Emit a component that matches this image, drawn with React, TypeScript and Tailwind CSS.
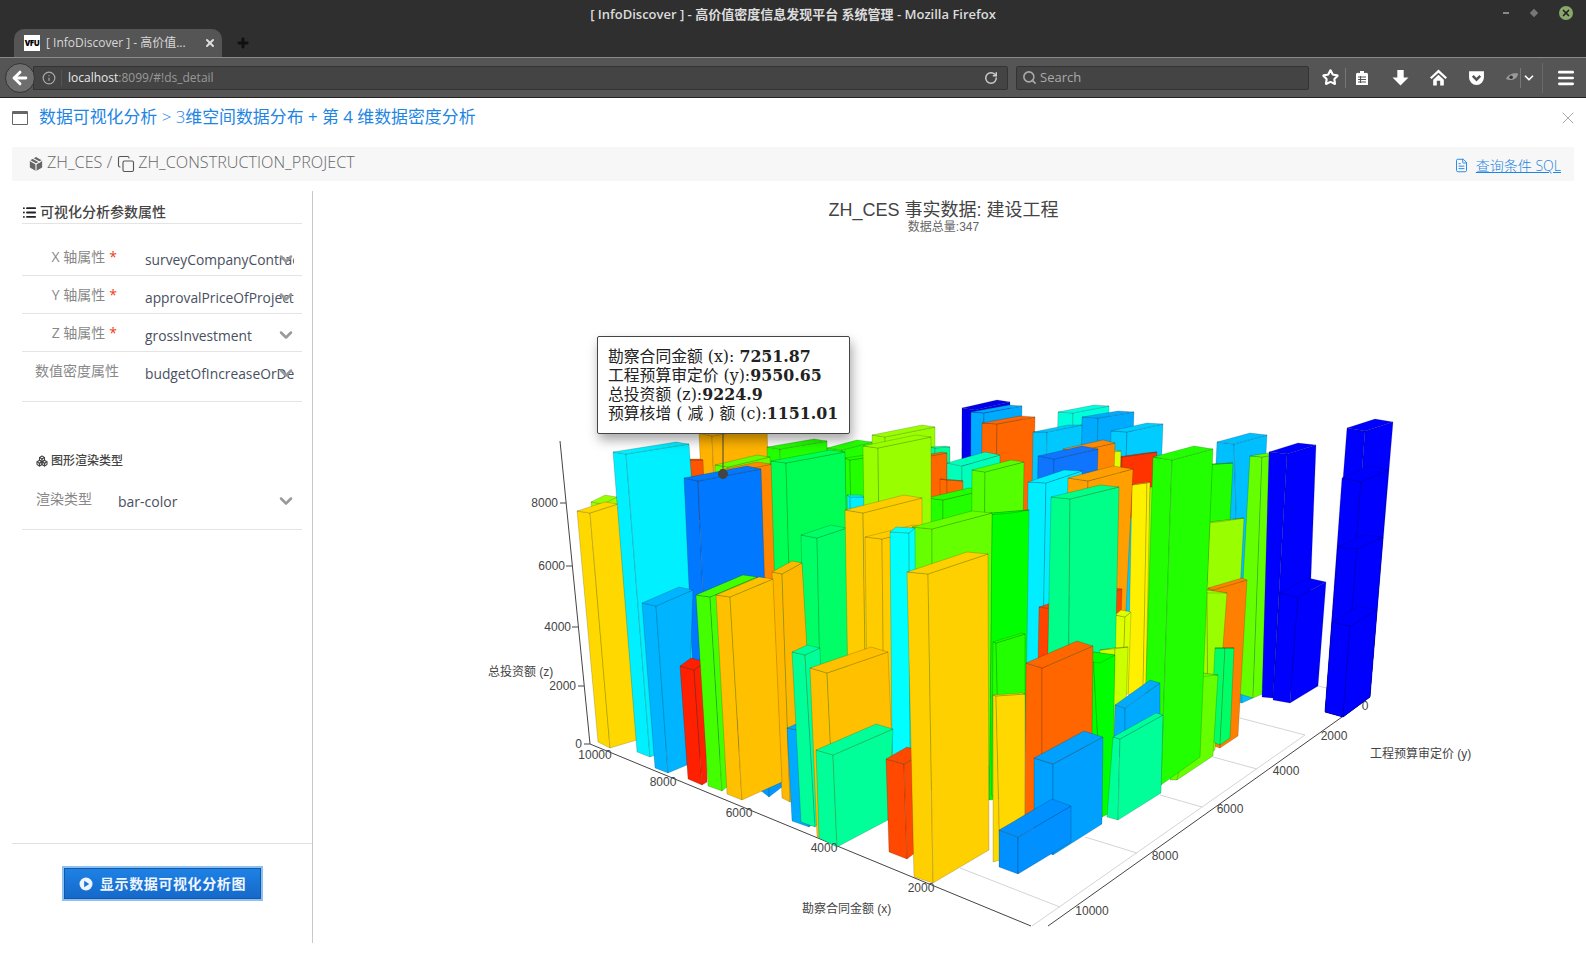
import { ArrowLeft, ChevronDown, Copy, FileText, Info, List, Menu, Package, Plus, RotateCw, Search, Star, X, Boxes } from 'lucide-react';

const sans = 'font-["Open_Sans","Noto_Sans_CJK_SC",sans-serif]';

type P = [number, number];
interface Bar {
  c: string;
  l: P; // left corner of the top face
  f: P; // front corner of the top face
  r: P; // right corner of the top face
  b: P; // front corner at the floor
  bl?: P; // left corner at the floor
  br?: P; // right corner at the floor
}

// back to front, page coordinates read off the plot
const bars: Bar[] = [
  { c: '#0000ee', l: [962, 408], f: [975, 410], r: [1010, 402], b: [985, 640] },
  { c: '#00aaff', l: [971, 412], f: [984, 413], r: [1022, 406], b: [990, 640] },
  { c: '#ff6600', l: [982, 423], f: [997, 424], r: [1035, 417], b: [1005, 700] },
  { c: '#00ffdd', l: [1058, 412], f: [1073, 413], r: [1109, 406], b: [1080, 640] },
  { c: '#00aaff', l: [1082, 417], f: [1098, 418], r: [1134, 412], b: [1110, 650] },
  { c: '#00ccff', l: [1111, 431], f: [1127, 432], r: [1163, 424], b: [1135, 650] },
  { c: '#00c8ff', l: [1033, 432], f: [1047, 432], r: [1082, 425], b: [1055, 650] },
  { c: '#ffb300', l: [699, 433], f: [712, 436], r: [767, 427], b: [730, 700] },
  { c: '#99ff00', l: [591, 502], f: [603, 504], r: [617, 497], b: [620, 742] },
  { c: '#22ff00', l: [767, 447], f: [780, 449], r: [827, 441], b: [800, 700] },
  { c: '#99ff00', l: [872, 435], f: [885, 437], r: [935, 427], b: [900, 600] },
  { c: '#22ff00', l: [827, 448], f: [842, 450], r: [872, 442], b: [860, 700] },
  { c: '#00ff99', l: [930, 447], f: [935, 448], r: [950, 447], b: [950, 560] },
  { c: '#ff6600', l: [925, 455], f: [930, 456], r: [947, 453], b: [950, 560] },
  { c: '#00ffbb', l: [947, 463], f: [962, 466], r: [1000, 455], b: [975, 560] },
  { c: '#ff6a00', l: [940, 479], f: [947, 480], r: [963, 481], b: [965, 560] },
  { c: '#ff5500', l: [687, 459], f: [690, 460], r: [703, 460], b: [705, 520] },
  { c: '#66ff00', l: [715, 465], f: [728, 467], r: [770, 457], b: [745, 620] },
  { c: '#ff8800', l: [720, 470], f: [735, 472], r: [772, 464], b: [755, 720] },
  { c: '#22ff00', l: [845, 458], f: [850, 460], r: [885, 455], b: [870, 650] },
  { c: '#00eeff', l: [847, 495], f: [850, 497], r: [864, 497], b: [870, 620] },
  { c: '#22ff00', l: [927, 498], f: [943, 500], r: [985, 490], b: [955, 700] },
  { c: '#55ff00', l: [972, 470], f: [985, 472], r: [1024, 462], b: [1000, 640] },

  // right side
  { c: '#00bfff', l: [1217, 442], f: [1234, 444], r: [1267, 435], b: [1242, 703], br: [1253, 698] },
  { c: '#66ff00', l: [1250, 456], f: [1262, 457], r: [1280, 454], b: [1253, 698], br: [1265, 693] },
  { c: '#0000ff', l: [1269, 452], f: [1287, 454], r: [1316, 445], b: [1273, 698], bl: [1262, 697], br: [1307, 680] },
  { c: '#0000ff', l: [1280, 593], f: [1298, 597], r: [1326, 582], b: [1290, 703], bl: [1273, 700], br: [1318, 686] },
  { c: '#0000ff', l: [1347, 428], f: [1365, 431], r: [1393, 422], b: [1343, 717], bl: [1325, 712], br: [1370, 697] },
  { c: '#0000ff', l: [1342, 478], f: [1361, 482], r: [1388, 470], b: [1343, 717], bl: [1325, 712], br: [1370, 697] },
  { c: '#0000ff', l: [1338, 547], f: [1357, 549], r: [1383, 537], b: [1343, 717], bl: [1325, 712], br: [1370, 697] },
  { c: '#0000ff', l: [1332, 622], f: [1350, 626], r: [1377, 610], b: [1343, 717], bl: [1325, 712], br: [1370, 697] },
  { c: '#22ff00', l: [1200, 465], f: [1212, 464], r: [1233, 463], b: [1225, 740] },
  { c: '#ff3300', l: [1195, 570], f: [1208, 569], r: [1221, 568], b: [1215, 700] },
  { c: '#99ff00', l: [1192, 525], f: [1210, 522], r: [1244, 518], b: [1218, 720] },
  { c: '#ff8000', l: [1208, 588], f: [1213, 590], r: [1247, 580], b: [1220, 748], br: [1238, 736] },
  { c: '#99ff00', l: [1190, 590], f: [1207, 590], r: [1227, 593], b: [1208, 755], br: [1215, 750] },
  { c: '#00ff66', l: [1215, 648], f: [1225, 648], r: [1234, 648], b: [1220, 745], br: [1230, 738] },

  // middle right
  { c: '#ff3300', l: [1110, 458], f: [1122, 457], r: [1157, 452], b: [1150, 520] },
  { c: '#ddff00', l: [1095, 452], f: [1105, 453], r: [1121, 451], b: [1120, 560] },
  { c: '#ff8800', l: [1063, 449], f: [1075, 452], r: [1115, 443], b: [1090, 500] },
  { c: '#0f75ff', l: [1038, 456], f: [1054, 459], r: [1098, 449], b: [1070, 520] },
  { c: '#99ff00', l: [1135, 490], f: [1150, 487], r: [1160, 486], b: [1160, 680] },
  { c: '#fff000', l: [1132, 485], f: [1147, 483], r: [1150, 482], b: [1143, 690], bl: [1128, 695], br: [1146, 688] },
  { c: '#00eeff', l: [1028, 482], f: [1046, 483], r: [1082, 471], b: [1050, 700] },
  { c: '#ffa000', l: [1068, 478], f: [1088, 481], r: [1133, 469], b: [1085, 700], br: [1122, 690] },
  { c: '#ff4400', l: [1039, 607], f: [1060, 610], r: [1122, 589], b: [1080, 760] },
  { c: '#ddff00', l: [1115, 615], f: [1125, 617], r: [1131, 612], b: [1135, 700] },
  { c: '#00ff88', l: [1051, 497], f: [1070, 499], r: [1119, 487], b: [1068, 745], br: [1114, 720] },
  { c: '#ccff00', l: [1100, 650], f: [1115, 648], r: [1128, 647], b: [1125, 740] },
  { c: '#66ff00', l: [1170, 676], f: [1202, 673], r: [1218, 675], b: [1177, 780], bl: [1170, 780], br: [1213, 756] },
  { c: '#22ff00', l: [1153, 457], f: [1172, 460], r: [1213, 449], b: [1161, 785], bl: [1143, 778], br: [1200, 757] },

  // left group
  { c: '#ffd800', l: [577, 511], f: [590, 513], r: [618, 504], b: [610, 748], bl: [598, 742], br: [637, 740] },
  { c: '#00f0ff', l: [613, 452], f: [626, 454], r: [689, 444], b: [650, 757], bl: [637, 752], br: [710, 735] },
  { c: '#0078ff', l: [684, 478], f: [698, 481], r: [761, 469], b: [720, 760] },
  { c: '#00b4ff', l: [642, 603], f: [656, 606], r: [693, 590], b: [668, 773], bl: [655, 768], br: [687, 765] },
  { c: '#ff2000', l: [680, 666], f: [694, 670], r: [705, 662], b: [702, 785], bl: [688, 779], br: [707, 782] },
  { c: '#44ff00', l: [696, 595], f: [710, 597], r: [757, 577], b: [722, 791], bl: [708, 786], br: [727, 787] },
  { c: '#00ff55', l: [771, 461], f: [786, 463], r: [845, 452], b: [805, 760] },
  { c: '#00ff66', l: [801, 535], f: [817, 538], r: [847, 528], b: [830, 760] },
  { c: '#0099ff', l: [755, 700], f: [768, 702], r: [785, 695], b: [769, 797], bl: [760, 790], br: [782, 787] },
  { c: '#ffb800', l: [772, 572], f: [782, 574], r: [802, 563], b: [790, 802], bl: [782, 798], br: [815, 790] },
  { c: '#ffc000', l: [716, 595], f: [730, 597], r: [773, 579], b: [742, 800], bl: [727, 794], br: [782, 782] },

  // center
  { c: '#99ff00', l: [863, 446], f: [878, 448], r: [931, 437], b: [900, 700] },
  { c: '#ffcc00', l: [845, 510], f: [863, 513], r: [922, 498], b: [880, 760] },
  { c: '#ffcc00', l: [865, 537], f: [882, 539], r: [930, 527], b: [895, 780] },
  { c: '#00ff00', l: [975, 516], f: [992, 513], r: [1029, 510], b: [1000, 800] },
  { c: '#66ff00', l: [912, 527], f: [932, 529], r: [992, 513], b: [960, 790] },
  { c: '#00ffff', l: [890, 532], f: [909, 533], r: [915, 528], b: [920, 770] },
  { c: '#00aaff', l: [787, 728], f: [797, 730], r: [815, 722], b: [809, 827], bl: [792, 821], br: [818, 820] },
  { c: '#00ff99', l: [792, 652], f: [805, 655], r: [820, 648], b: [815, 827], bl: [801, 822], br: [825, 820] },
  { c: '#ffc000', l: [810, 668], f: [827, 673], r: [888, 652], b: [835, 840], bl: [817, 837], br: [895, 815] },
  { c: '#00ff99', l: [816, 750], f: [833, 755], r: [893, 729], b: [837, 847], bl: [819, 838], br: [888, 820] },
  { c: '#22ff00', l: [993, 642], f: [996, 643], r: [1025, 634], b: [1000, 800], br: [1025, 790] },
  { c: '#ffd800', l: [993, 695], f: [996, 696], r: [1025, 694], b: [1000, 860], bl: [993, 862], br: [1025, 840] },
  { c: '#ff4800', l: [886, 759], f: [904, 764], r: [925, 752], b: [907, 859], bl: [889, 852], br: [925, 845] },
  { c: '#ffd000', l: [907, 572], f: [928, 574], r: [988, 554], b: [933, 883], bl: [914, 877], br: [989, 850] },

  // front right
  { c: '#00ff00', l: [1078, 660], f: [1093, 652], r: [1115, 655], b: [1102, 817], br: [1112, 812] },
  { c: '#ff6600', l: [1026, 663], f: [1042, 668], r: [1093, 646], b: [1042, 830], bl: [1025, 825], br: [1092, 737] },
  { c: '#00aaff', l: [1115, 705], f: [1125, 708], r: [1160, 683], b: [1125, 760], br: [1160, 760] },
  { c: '#00ff99', l: [1113, 737], f: [1120, 739], r: [1163, 715], b: [1118, 820], bl: [1107, 817], br: [1161, 793] },
  { c: '#00a0ff', l: [1034, 758], f: [1053, 764], r: [1103, 737], b: [1053, 855], bl: [1034, 845], br: [1102, 824] },
  { c: '#0090ff', l: [999, 830], f: [1018, 837], r: [1071, 806], b: [1018, 874], bl: [999, 867], br: [1071, 842] },
];

function pts(...p: P[]) {
  return p.map((a) => `${a[0]},${a[1]}`).join(' ');
}

// vertical edges lean toward the nadir of the camera, under the plot center
function lean(p: P, y: number): P {
  return [p[0] + (940 - p[0]) * (y - p[1]) * 0.00018, y];
}

function Bar3D({ bar }: { bar: Bar }) {
  const { c, l, f, r } = bar;
  const floor = bar.b[1];
  const b: P = bar.bl || bar.br ? bar.b : lean(f, floor);
  const bl: P = bar.bl || lean(l, floor + (l[1] - f[1]) - 4);
  const br: P = bar.br || lean(r, floor + (r[1] - f[1]) * 1.5);
  const back: P = [l[0] + r[0] - f[0], l[1] + r[1] - f[1]];
  return (
    <g fill={c} stroke="#000" strokeOpacity={0.22} strokeWidth={0.75} strokeLinejoin="round">
      <polygon points={pts(l, f, b, bl)} />
      <polygon points={pts(f, r, br, b)} />
      <polygon points={pts(l, back, r, f)} />
    </g>
  );
}

const zTicks: [string, number, number][] = [
  ['8000', 558, 503],
  ['6000', 565, 566],
  ['4000', 571, 627],
  ['2000', 576, 686],
  ['0', 582, 744],
];
const xTicks: [string, number, number][] = [
  ['10000', 595, 755],
  ['8000', 663, 782],
  ['6000', 739, 813],
  ['4000', 824, 848],
  ['2000', 921, 888],
];
const yTicks: [string, number, number][] = [
  ['0', 1365, 706],
  ['2000', 1334, 736],
  ['4000', 1286, 771],
  ['6000', 1230, 809],
  ['8000', 1165, 856],
  ['10000', 1092, 911],
];

function Chart() {
  const tick = { fontFamily: '"Liberation Sans", sans-serif', fontSize: 12, fill: '#444' };
  return (
    <svg viewBox="313 181 1273 762" className="absolute inset-0 h-full w-full">
      {/* floor grid */}
      <g stroke="#d4d4d4" strokeWidth={1} fill="none">
        <path d="M1060 907 L960 868" />
        <path d="M1137 853 L1085 837" />
        <path d="M1202 807 L1160 795" />
        <path d="M1257 769 L1213 757" />
        <path d="M1305 735 L1240 718" />
        <path d="M1032 926 L1305 735" />
        <path d="M741 795 L765 783" />
        <path d="M1318 686 L1345 692" />
      </g>
      {/* axes */}
      <g stroke="#444" strokeWidth={1} fill="none">
        <path d="M560 441 L590 744 L1031 926" />
        <path d="M1342 717 L1048 926" />
        <path d="M584 744 L590 744 M578 686 L584 686 M572 627 L578 627 M566 566 L572 566 M560 503 L566 503" />
      </g>
      {bars.map((b, i) => (
        <Bar3D key={i} bar={b} />
      ))}
      <g style={tick}>
        {zTicks.map(([t, x, y]) => (
          <text key={t} x={x} y={y + 4} textAnchor="end">
            {t}
          </text>
        ))}
        {xTicks.map(([t, x, y]) => (
          <text key={t} x={x} y={y + 4} textAnchor="middle">
            {t}
          </text>
        ))}
        {yTicks.map(([t, x, y]) => (
          <text key={t} x={x} y={y + 4} textAnchor="middle">
            {t}
          </text>
        ))}
      </g>
      <g style={{ fontFamily: '"Liberation Sans", "Noto Sans CJK SC", sans-serif', fontSize: 12, fill: '#444' }}>
        <text x={488} y={676}>总投资额 (z)</text>
        <text x={802} y={913}>勘察合同金额 (x)</text>
        <text x={1370} y={758}>工程预算审定价 (y)</text>
      </g>
      <g fill="#444" stroke="#444">
        <path d="M723 433 L723 474" fill="none" />
        <circle cx={723} cy={474} r={4.5} />
      </g>
    </svg>
  );
}

function Field({ label, value, required, line = true }: { label: string; value: string; required?: boolean; line?: boolean }) {
  return (
    <div className={line ? 'flex h-[38px] items-start border-b border-[#e4e4e4]' : 'flex h-[38px] items-start'}>
      <div className={required ? 'flex w-[123px] justify-end pr-[28px] pt-[9px] text-[14px] leading-[20px] text-[#888]' : 'flex w-[123px] justify-end pr-[26px] pt-[9px] text-[14px] leading-[20px] text-[#888]'}>
        {label}
        {required && <span className="ml-1 text-[#ed4014]">*</span>}
      </div>
      <div className="relative w-[149px] overflow-hidden pt-[12px] text-[13.8px] leading-[20px] whitespace-nowrap text-[#495060]">
        {value}
        <ChevronDown className="absolute right-[-2px] top-[11px] h-5 w-5 text-[#999]" strokeWidth={3} />
      </div>
    </div>
  );
}

export default function App() {
  return (
    <div className={`flex h-[960px] w-[1586px] flex-col overflow-hidden bg-white ${sans}`}>
      {/* window title + tab strip */}
      <div className="relative h-[57px] shrink-0 bg-[#2f2f2f]">
        <div className="flex h-[29px] items-center justify-center text-[13px] font-semibold text-[#dcdcdc]">
          [ InfoDiscover ] - 高价值密度信息发现平台 系统管理 - Mozilla Firefox
        </div>
        <div className="absolute right-[13px] top-[6px] flex items-center gap-[22px]">
          <div className="h-[2px] w-[6px] bg-[#888]" />
          <div className="h-[6px] w-[6px] rotate-45 bg-[#777]" />
          <div className="flex h-[14px] w-[14px] items-center justify-center rounded-full bg-[#8aa86a]">
            <X className="h-[10px] w-[10px] text-[#222]" strokeWidth={4} />
          </div>
        </div>
        <div className="flex items-end pl-[14px]">
          <div className="flex h-[28px] w-[208px] items-center rounded-t-[10px] bg-[#555] pl-[10px] pr-[6px]">
            <div className="flex h-4 w-4 shrink-0 items-center justify-center bg-white text-[8px] leading-none font-black tracking-tighter text-black">VFU</div>
            <span className="ml-[6px] flex-1 text-[12px] whitespace-nowrap text-[#d8d8d8]">[ InfoDiscover ] - 高价值...</span>
            <X className="h-[12px] w-[12px] shrink-0 text-[#ddd]" strokeWidth={4} />
          </div>
          <Plus className="mb-[7px] ml-[14px] h-[14px] w-[14px] text-[#111]" strokeWidth={5} />
        </div>
      </div>

      {/* toolbar */}
      <div className="flex h-[41px] shrink-0 items-center border-t border-t-[#8a8a8a] border-b border-b-[#222] bg-[#555] pl-[5px] pr-[10px]">
        <div className="z-10 flex h-[30px] w-[30px] shrink-0 items-center justify-center rounded-full border border-[#333] bg-[#6e6e6e]">
          <ArrowLeft className="h-5 w-5 text-white" strokeWidth={3.5} />
        </div>
        <div className="-ml-[2px] flex h-[24px] w-[975px] shrink-0 items-center rounded-r-[2px] border border-[#333] bg-[#444] pl-[8px] pr-[9px]">
          <Info className="h-[14px] w-[14px] text-[#aaa]" />
          <div className="ml-[5px] h-[16px] w-px bg-[#555]" />
          <span className="ml-[6px] text-[12px] text-[#e8e8e8]">localhost</span>
          <span className="text-[12px] text-[#999]">:8099/#!ds_detail</span>
          <RotateCw className="ml-auto h-[14px] w-[14px] text-[#ccc]" strokeWidth={2.5} />
        </div>
        <div className="ml-[8px] flex h-[24px] w-[293px] shrink-0 items-center rounded-[2px] border border-[#333] bg-[#444] pl-[5px]">
          <Search className="h-[15px] w-[15px] text-[#aaa]" strokeWidth={2.5} />
          <span className="ml-[3px] text-[13px] text-[#aaa]">Search</span>
        </div>
        <div className="ml-[13px] flex flex-1 items-center text-white">
          <Star className="h-[17px] w-[17px]" strokeWidth={3} />
          <div className="mx-[6px] h-[20px] w-px bg-[#777]" />
          <svg viewBox="0 0 16 16" className="ml-[2px] h-[16px] w-[16px]">
            <path d="M5 3 H6 V1 H10 V3 H11 A2 2 0 0 1 14 5 V15 H2 V5 A2 2 0 0 1 5 3 Z" fill="#fff" />
            <path d="M4 7 H12 M4 9.5 H12 M4 12 H12 M6.5 6 V13" stroke="#555" strokeWidth="1.1" fill="none" />
          </svg>
          <svg viewBox="0 0 16 16" className="ml-[22px] h-[17px] w-[17px]">
            <path d="M5 1 H11 V8 H15.5 L8 15.5 L0.5 8 H5 Z" fill="#fff" />
          </svg>
          <svg viewBox="0 0 16 16" className="ml-[21px] h-[17px] w-[17px]">
            <path d="M8 0.5 L16 8 L14.5 9.5 L8 3.5 L1.5 9.5 L0 8 Z" fill="#fff" />
            <path d="M3 10 L8 5.5 L13 10 V15.5 H9.6 V11 H6.4 V15.5 H3 Z" fill="#fff" />
          </svg>
          <svg viewBox="0 0 16 16" className="ml-[21px] h-[17px] w-[17px]">
            <path d="M1 2 H15 V8 A7 7 0 0 1 1 8 Z" fill="#fff" />
            <path d="M4.5 6.5 L8 10 L11.5 6.5" fill="none" stroke="#555" strokeWidth="2.4" />
          </svg>
          <svg viewBox="0 0 16 16" className="ml-[20px] h-[14px] w-[14px]">
            <path d="M1 9 C4 3 11 2 15 3 C14 9 8 12 1 9 Z" fill="#999" />
            <circle cx="7" cy="7" r="2" fill="#333" />
          </svg>
          <div className="mx-[1px] h-[20px] w-px bg-[#777]" />
          <ChevronDown className="h-[14px] w-[14px]" strokeWidth={3} />
          <div className="mx-[6px] h-[30px] w-px bg-[#6a6a6a]" />
          <Menu className="ml-[7px] h-[20px] w-[20px]" strokeWidth={3.2} />
        </div>
      </div>

      {/* page */}
      <div className="flex flex-1 flex-col">
        <div className="flex h-[49px] shrink-0 items-center pb-[10px] pl-[12px] pr-[8px]">
          <div className="h-[14px] w-[16px] rounded-[1px] border border-[#666] border-t-[3px]" />
          <div className="ml-[11px] text-[16.9px] leading-none text-[#1e85e2]">
            数据可视化分析 <span className="font-light">&gt; 3</span>维空间数据分布 + 第 4 维数据密度分析
          </div>
          <X className="ml-auto h-[20px] w-[20px] text-[#999]" strokeWidth={1} />
        </div>

        <div className="mx-[12px] flex h-[34px] shrink-0 items-center bg-[#f7f7f7] pl-[15px] pr-[13px] font-light text-[#666]">
          <Package className="h-[18px] w-[18px] fill-[#666] text-[#f7f7f7]" strokeWidth={1.5} />
          <span className="mb-[4px] ml-[2px] text-[16.2px]">ZH_CES /</span>
          <Copy className="ml-[5px] h-[18px] w-[18px] text-[#555]" strokeWidth={1.5} />
          <span className="mb-[4px] ml-[3px] text-[16.2px]">ZH_CONSTRUCTION_PROJECT</span>
          <div className="ml-auto flex items-center pt-[3px] text-[14px] text-[#1e85e2]">
            <FileText className="mr-[7px] h-[15px] w-[15px]" strokeWidth={1.5} />
            <span className="underline">查询条件 SQL</span>
          </div>
        </div>

        <div className="flex h-[762px] shrink-0 pt-[10px]">
          {/* left panel */}
          <div className="flex w-[313px] shrink-0 flex-col border-r border-[#c8c8c8] pl-[12px]">
            <div className="flex-1 pl-[10px] pr-[10px]">
              <div className="flex h-[33px] items-end border-b border-[#e4e4e4] pb-[1px] text-[14px] font-medium text-[#444]">
                <List className="mr-[3px] mb-[2px] h-[15px] w-[15px] text-[#222]" strokeWidth={3} />
                可视化分析参数属性
              </div>
              <div className="pt-[14px]">
                <Field label="X 轴属性" value="surveyCompanyContractAmount" required />
                <Field label="Y 轴属性" value="approvalPriceOfProject" required />
                <Field label="Z 轴属性" value="grossInvestment" required />
                <div className="h-[50px] border-b border-[#e4e4e4]">
                  <Field label="数值密度属性" value="budgetOfIncreaseOrDecrease" line={false} />
                </div>
              </div>
              <div className="mt-[50px] flex items-center pl-[14px] text-[12px] font-medium text-[#444]">
                <Boxes className="mr-[3px] h-3 w-3" strokeWidth={2.2} />
                图形渲染类型
              </div>
              <div className="mt-[17px] flex h-[43px] items-start border-b border-[#e4e4e4] pl-[14px]">
                <span className="pt-[2px] text-[14px] leading-[20px] text-[#888]">渲染类型</span>
                <span className="relative ml-[26px] flex w-[176px] pt-[5px] text-[14px] leading-[20px] text-[#495060]">
                  bar-color
                  <ChevronDown className="absolute right-[-2px] top-[4px] h-5 w-5 text-[#999]" strokeWidth={3} />
                </span>
              </div>
            </div>
            <div className="flex h-[100px] shrink-0 items-start justify-center border-t border-[#e0e0e0] pt-[22px] pl-[1px]">
              <button className="flex h-[35px] w-[201px] items-center justify-center gap-[7px] border-2 border-[#8cc0f0] bg-gradient-to-b from-[#1e82e6] to-[#1668c8] text-[14px] font-semibold tracking-[0.6px] text-[#eef5ff] shadow-[inset_0_0_0_1px_#1558a8]">
                <svg viewBox="0 0 14 14" className="h-[14px] w-[14px]">
                  <circle cx="7" cy="7" r="6.5" fill="#eef5ff" />
                  <path d="M5.2 3.8 L10.2 7 L5.2 10.2 Z" fill="#1a74d8" />
                </svg>
                显示数据可视化分析图
              </button>
            </div>
          </div>

          {/* chart */}
          <div className="relative flex-1 -mt-[10px]">
            <Chart />
            <div className="relative flex flex-col items-center pt-[18px] pr-[12px] text-[#444]">
              <div className='text-[18px] leading-[22px] font-["Liberation_Sans","Noto_Sans_CJK_SC",sans-serif]'>ZH_CES 事实数据: 建设工程</div>
              <div className='text-[12px] leading-[12px] font-["Liberation_Sans","Noto_Sans_CJK_SC",sans-serif] text-[#666]'>数据总量:347</div>
            </div>
            {/* hover label of the plot */}
            <div className='absolute left-[284px] top-[155px] flex h-[98px] w-[253px] flex-col justify-center rounded-[2px] border border-[#444] bg-white pl-[10px] text-[15.8px] leading-[19px] text-[#222] shadow-[2px_6px_12px_rgba(0,0,0,0.35)] font-["DejaVu_Serif","Noto_Sans_CJK_SC",serif]'>
              <div>勘察合同金额 (x): <b>7251.87</b></div>
              <div>工程预算审定价 (y):<b>9550.65</b></div>
              <div>总投资额 (z):<b>9224.9</b></div>
              <div>预算核增 ( 减 ) 额 (c):<b>1151.01</b></div>
            </div>
          </div>
        </div>
      </div>
    </div>
  );
}
